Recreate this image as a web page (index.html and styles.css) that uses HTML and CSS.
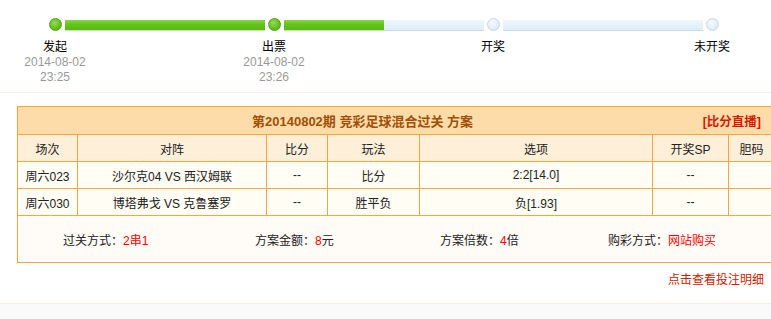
FILE: index.html
```html
<!DOCTYPE html>
<html lang="zh-CN">
<head>
<meta charset="utf-8">
<title>方案详情</title>
<link rel="stylesheet" href="styles.css">
</head>
<body>
<div class="progress">
  <div class="track">
    <span class="dot done"></span>
    <span class="bar done"></span>
    <span class="dot done"></span>
    <span class="bar half"><span class="fill"></span></span>
    <span class="dot"></span>
    <span class="bar"></span>
    <span class="dot"></span>
  </div>
  <div class="labels">
    <div class="step"><div class="name">发起</div><div class="time">2014-08-02</div><div class="time">23:25</div></div>
    <div class="step"><div class="name">出票</div><div class="time">2014-08-02</div><div class="time">23:26</div></div>
    <div class="step"><div class="name">开奖</div></div>
    <div class="step"><div class="name">未开奖</div></div>
  </div>
</div>

<div class="plan">
  <table class="scheme">
    <colgroup>
      <col class="c1"><col class="c2"><col class="c3"><col class="c4"><col class="c5"><col class="c6"><col class="c7">
    </colgroup>
    <tr class="title-row">
      <td colspan="7">
        <div class="title-inner">
          <span class="title">第20140802期 竞彩足球混合过关 方案</span>
          <span class="live">[比分直播]</span>
        </div>
      </td>
    </tr>
    <tr class="head-row">
      <td>场次</td><td>对阵</td><td>比分</td><td>玩法</td><td>选项</td><td>开奖SP</td><td>胆码</td>
    </tr>
    <tr class="data-row">
      <td>周六023</td><td>沙尔克04 VS 西汉姆联</td><td>--</td><td>比分</td><td>2:2[14.0]</td><td>--</td><td></td>
    </tr>
    <tr class="data-row">
      <td>周六030</td><td>博塔弗戈 VS 克鲁塞罗</td><td>--</td><td>胜平负</td><td>负[1.93]</td><td>--</td><td></td>
    </tr>
    <tr class="sum-row">
      <td colspan="7">
        <div class="summary">
          <span class="s1">过关方式：<em>2串1</em></span>
          <span class="s2">方案金额：<em>8</em>元</span>
          <span class="s3">方案倍数：<em>4</em>倍</span>
          <span class="s4">购彩方式：<em>网站购买</em></span>
        </div>
      </td>
    </tr>
  </table>
  <div class="detail"><a class="detail-link">点击查看投注明细</a></div>
</div>
<div class="footer"></div>
</body>
</html>
```

FILE: styles.css
```css
html { overflow: hidden; }
body {
  margin: 0;
  background: #fff;
  font-family: "Liberation Sans", "Noto Sans CJK SC", sans-serif;
  font-size: 12px;
  color: #222;
}

.progress {
  padding-top: 18px;
  height: 74px;
  border-bottom: 1px solid #fdeee8;
}
.track {
  display: flex;
  align-items: center;
  height: 13px;
  padding-left: 49px;
}
.dot {
  width: 11px;
  height: 11px;
  border-radius: 50%;
  border: 1px solid #c5d8ea;
  background: radial-gradient(circle at 40% 35%, #f7fbfe, #dbeaf7 75%);
  flex: none;
}
.dot.done {
  border-color: #4f9f17;
  background: radial-gradient(circle at 40% 35%, #94dc52, #5cba14 70%);
}
.bar {
  width: 200px;
  height: 10px;
  margin: 0 3px;
  flex: none;
  background: linear-gradient(#eef7fd, #dcedf9);
  box-shadow: 0 1px 0 #cbd9e6;
  display: flex;
}
.bar.done {
  background: linear-gradient(#8ad448, #63c41b 45%, #57b90f);
  box-shadow: 0 1px 0 #c9e4b4;
}
.bar .fill {
  width: 100px;
  height: 10px;
  background: linear-gradient(#8ad448, #63c41b 45%, #57b90f);
  box-shadow: 0 1px 0 #c9e4b4;
}
.labels {
  display: flex;
  gap: 109px;
  margin-top: 9px;
}
.step {
  width: 110px;
  text-align: center;
  line-height: 15px;
}
.step .name { color: #000; }
.step .time { color: #999; }

.plan {
  padding: 13px 0 0 17px;
  height: 197px;
  border-bottom: 1px solid #fdeee8;
}
.scheme {
  border-collapse: collapse;
  table-layout: fixed;
  width: 757px;
}
.scheme td {
  border: 1px solid #f7a53d;
  text-align: center;
  padding: 0;
  white-space: nowrap;
  overflow: hidden;
}
.c1 { width: 60px; }
.c2 { width: 189px; }
.c3 { width: 61px; }
.c4 { width: 92px; }
.c5 { width: 233px; }
.c6 { width: 76px; }
.c7 { width: 46px; }

.title-row td {
  height: 27px;
  background: #fedcaa;
}
.title-inner {
  display: flex;
  align-items: center;
  padding: 0 13px 0 234px;
  font-size: 13px;
  font-weight: bold;
}
.title { color: #a04f04; }
.live { margin-left: auto; color: #d41a00; font-size: 12.5px; }

.head-row td {
  height: 26px;
  background: #feefd9;
  color: #222;
}
.data-row td {
  height: 26px;
  background: #fffdf4;
  color: #222;
}
.sum-row td {
  height: 46px;
  background: #fffbf7;
}
.summary {
  display: flex;
  padding-left: 45px;
  text-align: left;
  color: #222;
}
.summary em { font-style: normal; color: #f00; }
.s1 { width: 192px; }
.s2 { width: 185px; }
.s3 { width: 168px; }

.detail {
  display: flex;
  justify-content: flex-end;
  padding: 10px 7px 0 0;
  line-height: 15px;
}
.detail-link { color: #d01b00; cursor: pointer; }

.footer {
  height: 15px;
  background: #fafafa;
}
```
